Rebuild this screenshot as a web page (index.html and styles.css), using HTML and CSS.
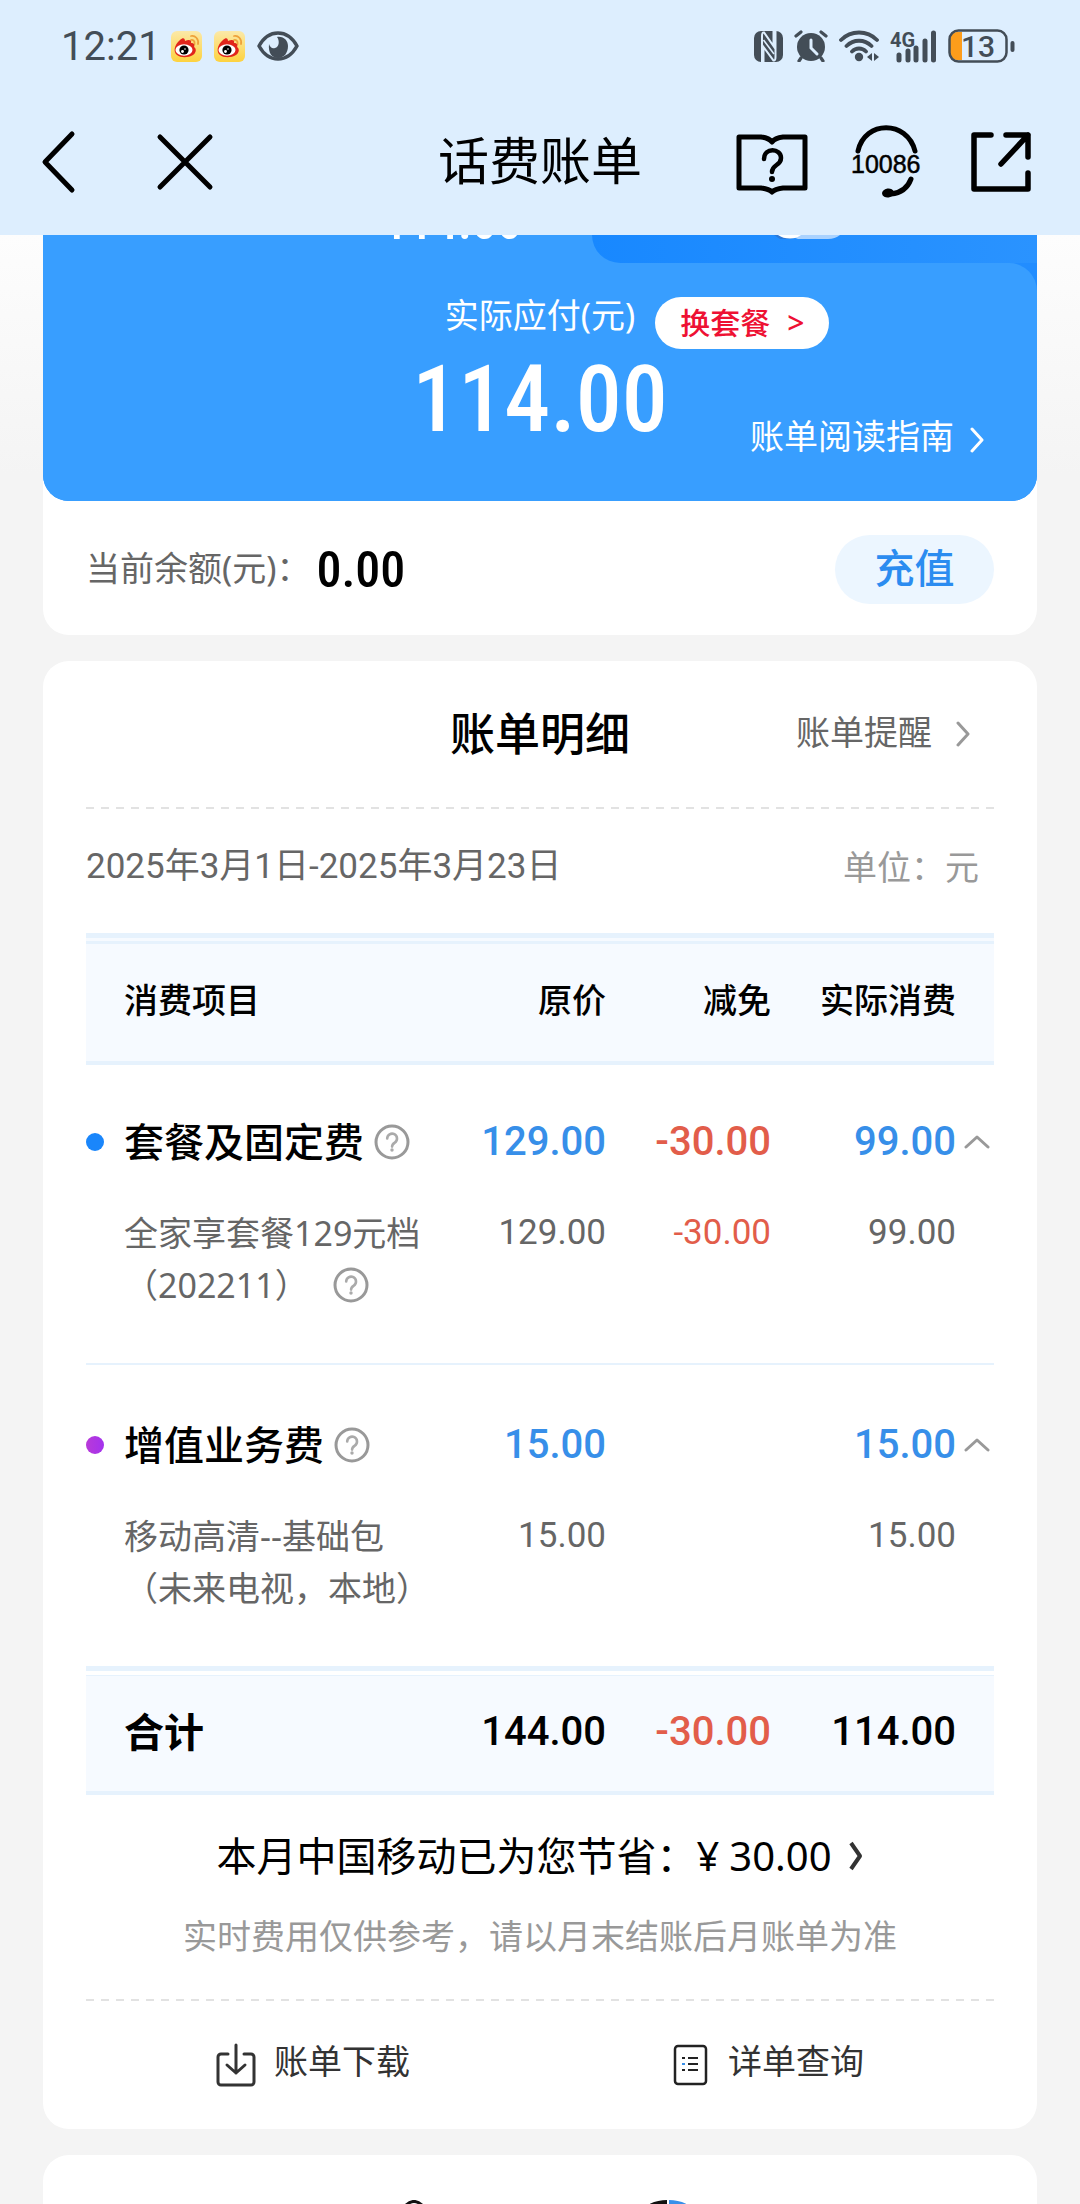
FILE: index.html
```html
<!DOCTYPE html>
<html lang="zh-CN">
<head>
<meta charset="utf-8">
<meta name="viewport" content="width=device-width, initial-scale=1">
<title>话费账单</title>
<link rel="stylesheet" href="styles.css">
</head>
<body>
<svg class="sprite" aria-hidden="true">
  <symbol id="help" viewBox="0 0 36 36">
    <circle cx="18" cy="18" r="16" fill="none" stroke="#999" stroke-width="3"/>
    <path d="M13.200 14.500a4.900 4.900 0 1 1 7.600 4.100c-1.900 1.200-2.700 2-2.700 4" fill="none" stroke="#aaa" stroke-width="2.600" stroke-linecap="round"/>
    <circle cx="18" cy="26" r="1.700" fill="#aaa"/>
  </symbol>
  <symbol id="arrow" viewBox="0 0 14 26">
    <path d="M2 2l10 11L2 24" fill="none" stroke="currentColor" stroke-width="3" stroke-linecap="round" stroke-linejoin="round"/>
  </symbol>
  <symbol id="fold" viewBox="0 0 26 14">
    <path d="M2 12L13 2l11 10" fill="none" stroke="#999" stroke-width="3" stroke-linecap="round" stroke-linejoin="round"/>
  </symbol>
  <symbol id="weibo" viewBox="0 0 31 31">
    <rect width="31" height="31" rx="6" fill="url(#gold)"/>
    <path d="M20 5c4-1 8 3 7 8" fill="none" stroke="#eea13a" stroke-width="1.800" stroke-linecap="round"/>
    <path d="M20 9c2-.5 4 1 3.500 4" fill="none" stroke="#eea13a" stroke-width="1.800" stroke-linecap="round"/>
    <path d="M9 9c3-3 5-2 5 1 4-2 7-1 6 2 3 0 4 2 3 4 3 2 2 6-1 8-5 3-12 3-16 0C2 21 3 14 9 9z" fill="#e1251b"/>
    <ellipse cx="13" cy="19" rx="8.500" ry="5.800" fill="#fff"/>
    <circle cx="13" cy="19" r="4.600" fill="#000"/>
    <circle cx="11.500" cy="20.500" r="1.400" fill="#fff"/>
    <circle cx="14" cy="18" r=".8" fill="#fff"/>
  </symbol>
  <linearGradient id="gold" x1="0" y1="0" x2="0" y2="1">
    <stop offset="0" stop-color="#fbe9a8"/><stop offset="1" stop-color="#fdd23f"/>
  </linearGradient>
</svg>

<header class="top">
  <div class="status">
    <span class="clock">12:21</span>
    <svg class="app" width="31" height="31"><use href="#weibo"/></svg>
    <svg class="app" width="31" height="31"><use href="#weibo"/></svg>
    <svg width="42" height="30" viewBox="0 0 42 30">
      <path d="M2 15C7 6 14 2 21 2s14 4 19 13c-5 9-12 13-19 13S7 24 2 15z" fill="none" stroke="#434d57" stroke-width="3.500" stroke-linejoin="round"/>
      <path d="M20 6c7-1 11 4 11 9 0 7-4 12-10 12S11 22 12 13c1 3 3 5 6 4 4-1 5-7 2-11z" fill="#434d57"/>
    </svg>
    <div class="signals">
      <svg width="29" height="31" viewBox="0 0 29 31">
        <rect width="29" height="31" rx="7" fill="#434d57"/>
        <path d="M8 31V5q0-4 2-3.500L19.500 15V0M21.500 0v26q0 4-2 3.500L9.500 16v15" fill="none" stroke="#ddeefe" stroke-width="2"/>
        <path d="M9.500 9L20 23" stroke="#ddeefe" stroke-width="1.600"/>
      </svg>
      <svg width="34" height="32" viewBox="0 0 34 32" fill="none" stroke="#434d57" stroke-linecap="round">
        <circle cx="17" cy="17" r="14" fill="#434d57" stroke="none"/>
        <path d="M2 6l5-4M32 6l-5-4M7 28l-2 3M27 28l2 3" stroke-width="3.200"/>
        <path d="M17 10v8l6 6" stroke="#ddeefe" stroke-width="3"/>
      </svg>
      <svg width="40" height="32" viewBox="0 0 40 32" fill="none" stroke="#434d57" stroke-width="3.800" stroke-linecap="round">
        <path d="M2 10c10-10 26-10 36 0M7.500 16c7-7 18-7 25 0M13 21.500c4-4 10-4 14 0"/>
        <circle cx="20" cy="27" r="4.200" fill="#434d57" stroke="none"/>
        <path d="M33 23v8l-5-4zM35 23v8l5-4z" fill="#434d57" stroke="none"/>
      </svg>
      <svg class="bars" width="47" height="33" viewBox="0 0 47 33">
        <text x="0" y="17" class="net">4G</text>
        <path d="M9 25v5M18 21v9M26 18v12M35 11v19M43.500 3v27" stroke="#434d57" stroke-width="5" stroke-linecap="round"/>
      </svg>
      <svg width="68" height="34" viewBox="0 0 68 34">
        <path d="M9 3h5v28H9a7 7 0 0 1-7-7V10a7 7 0 0 1 7-7z" fill="#fd9d1b"/>
        <rect x="1.500" y="1.500" width="57" height="31" rx="9" fill="none" stroke="#434d57" stroke-width="2.500"/>
        <path d="M64.500 14v7" stroke="#434d57" stroke-width="4" stroke-linecap="round"/>
        <text x="13" y="28" class="charge">13</text>
      </svg>
    </div>
  </div>
  <nav class="nav">
    <div class="nav-side">
      <button type="button" class="plain" aria-label="返回">
        <svg width="36" height="64" viewBox="0 0 36 64" fill="none" stroke="#000" stroke-width="5" stroke-linecap="round" stroke-linejoin="round"><path d="M32 4L5 32l27 28"/></svg>
      </button>
      <button type="button" class="plain close" aria-label="关闭">
        <svg width="58" height="58" viewBox="0 0 58 58" fill="none" stroke="#000" stroke-width="5" stroke-linecap="round"><path d="M4 4l50 50M54 4L4 54"/></svg>
      </button>
    </div>
    <h1 class="page-title">话费账单</h1>
    <div class="nav-side nav-tools">
      <button type="button" class="plain" aria-label="帮助">
        <svg width="72" height="66" viewBox="0 0 72 66" fill="none" stroke="#000" stroke-width="5" stroke-linecap="round" stroke-linejoin="round">
          <path d="M3 8h22q8 1 11 5 3-4 11-5h22v51H47q-8 1-11 4-3-3-11-4H3z"/>
          <path d="M28 30c0-12 17-11 17-1 0 8-9 6-9 14" stroke-width="4.500"/>
          <circle cx="36" cy="50" r="3" fill="#000" stroke="none"/>
        </svg>
      </button>
      <button type="button" class="plain" aria-label="客服 10086">
        <svg width="78" height="76" viewBox="0 0 78 76" fill="none" stroke="#000" stroke-width="5" stroke-linecap="round">
          <path d="M8 27C15-4 57-4 65 27"/>
          <path d="M61 55c-3 8-10 14-20 15"/>
          <ellipse cx="38" cy="69" rx="6" ry="4.500" fill="#000" stroke="none" transform="rotate(-8 38 69)"/>
          <text x="1" y="49" class="hotline">10086</text>
        </svg>
      </button>
      <button type="button" class="plain" aria-label="分享">
        <svg width="62" height="62" viewBox="0 0 62 62" fill="none" stroke="#000" stroke-width="5.500" stroke-linecap="round" stroke-linejoin="round">
          <path d="M21 4H4v54h54V42M36 4h22v22M58 4L31 33"/>
        </svg>
      </button>
    </div>
  </nav>
</header>

<main class="content">
  <section class="card">
    <div class="hero">
      <div class="hero-peek">
        <span class="peek-amount">114.00</span>
        <div class="peek-tab">
          <svg width="80" height="4" viewBox="0 0 80 4"><path d="M14 0h52q-5 4-12 4H24z" fill="#a9d2ff"/><path d="M0 0h26q-4 4-13 4H6z" fill="#2a78d8"/><path d="M4 0h23q-4 3.500-11 3.500T4 0z" fill="#fff"/></svg>
        </div>
      </div>
      <div class="hero-main">
        <div class="hero-row">
          <span class="due-label">实际应付(元)</span>
          <a href="#" class="pill">换套餐<span>&gt;</span></a>
        </div>
        <div class="hero-row hero-sum">
          <strong class="due">114.00</strong>
          <a href="#" class="guide"><span>账单阅读指南</span><svg width="14" height="26"><use href="#arrow"/></svg></a>
        </div>
      </div>
    </div>
    <div class="balance">
      <span class="balance-label">当前余额(元)：</span>
      <strong class="balance-value">0.00</strong>
      <button type="button" class="recharge">充值</button>
    </div>
  </section>

  <section class="card detail">
    <div class="detail-head">
      <h2>账单明细</h2>
      <a href="#" class="remind"><span>账单提醒</span><svg width="14" height="26"><use href="#arrow"/></svg></a>
    </div>
    <div class="dashes"></div>
    <div class="period"><span class="range">2025年3月1日-2025年3月23日</span><span class="unit">单位：元</span></div>

    <table class="bill">
      <colgroup><col><col class="c-price"><col class="c-cut"><col class="c-real"><col class="c-fold"></colgroup>
      <thead>
        <tr><th scope="col" class="name">消费项目</th><th scope="col">原价</th><th scope="col">减免</th><th scope="col">实际消费</th><td></td></tr>
      </thead>
      <tbody>
        <tr class="group">
          <th scope="row" class="name"><div class="label"><i class="dot blue"></i>套餐及固定费<svg class="q" width="36" height="36"><use href="#help"/></svg></div></th>
          <td>129.00</td><td class="cut">-30.00</td><td>99.00</td>
          <td class="fold"><button type="button" class="plain" aria-label="收起"><svg width="26" height="14"><use href="#fold"/></svg></button></td>
        </tr>
        <tr class="item">
          <th scope="row" class="name"><div>全家享套餐129元档</div><div class="label">（202211）<svg class="q wide" width="36" height="36"><use href="#help"/></svg></div></th>
          <td>129.00</td><td class="cut">-30.00</td><td>99.00</td><td></td>
        </tr>
      </tbody>
      <tbody>
        <tr class="group">
          <th scope="row" class="name"><div class="label"><i class="dot purple"></i>增值业务费<svg class="q" width="36" height="36"><use href="#help"/></svg></div></th>
          <td>15.00</td><td></td><td>15.00</td>
          <td class="fold"><button type="button" class="plain" aria-label="收起"><svg width="26" height="14"><use href="#fold"/></svg></button></td>
        </tr>
        <tr class="item">
          <th scope="row" class="name"><div>移动高清--基础包</div><div>（未来电视，本地）</div></th>
          <td>15.00</td><td></td><td>15.00</td><td></td>
        </tr>
      </tbody>
      <tfoot>
        <tr><th scope="row" class="name">合计</th><td>144.00</td><td class="cut">-30.00</td><td>114.00</td><td></td></tr>
      </tfoot>
    </table>

    <a href="#" class="saving"><span>本月中国移动已为您节省：</span><span class="yen">¥</span><span>30.00</span><svg width="16" height="32" viewBox="0 0 16 32"><path d="M3 3l9 13-9 13" fill="none" stroke="#333" stroke-width="4" stroke-linejoin="round"/></svg></a>
    <p class="note">实时费用仅供参考，请以月末结账后月账单为准</p>
    <div class="dashes"></div>
    <div class="actions">
      <a href="#">
        <svg width="40" height="44" viewBox="0 0 40 44" fill="none" stroke="#333" stroke-width="3" stroke-linecap="round" stroke-linejoin="round"><path d="M12 11H5a3 3 0 0 0-3 3v25a3 3 0 0 0 3 3h30a3 3 0 0 0 3-3V14a3 3 0 0 0-3-3h-7M20 2v28M11 22l9 8 9-8"/></svg>
        <span>账单下载</span>
      </a>
      <a href="#">
        <svg width="40" height="44" viewBox="0 0 40 44"><rect x="5" y="3" width="31" height="38" rx="3" fill="none" stroke="#222" stroke-width="2.500"/><path d="M18 15h10M18 21h10M18 27h10" stroke="#222" stroke-width="2"/><path d="M12 15h3M12 27h3" stroke="#222" stroke-width="2"/><path d="M12 21h3" stroke="#378fe9" stroke-width="2"/></svg>
        <span>详单查询</span>
      </a>
    </div>
  </section>

  <section class="card next">
    <svg width="18" height="4" viewBox="0 0 18 4" fill="none"><path d="M0 6q9-9 18 0" stroke="#111" stroke-width="3"/></svg>
    <svg class="ring" width="36" height="4" viewBox="0 0 36 4" fill="none" stroke-width="4"><path d="M0 6q8-4 17-4" stroke="#111"/><path d="M19 2q9 0 17 4" stroke="#378fe9"/></svg>
  </section>
</main>
</body>
</html>
```

FILE: styles.css
```css
:root {
  --text: 34px;
  --digits: 35px;
  --large: 40px;
  --blue: #378fe9;
  --red: #e25d4a;
  --line: #e6f2fd;
  --band: #f6faff;
  --gray: #666;
  --light: #999;
  --numeric: Roboto, "Noto Sans CJK SC", sans-serif;
  --narrow: "Roboto Condensed", Roboto, sans-serif;
}

* { box-sizing: border-box; }

body {
  margin: 0;
  min-height: 100vh;
  display: flex;
  flex-direction: column;
  background: #f4f4f4;
  color: #000;
  font-family: "Noto Sans", "Noto Sans CJK SC", sans-serif;
  font-size: var(--text);
  line-height: 48px;
}

a { color: inherit; text-decoration: none; }
h1, h2, p { margin: 0; }
svg { display: block; flex: none; }
.sprite { position: absolute; width: 0; height: 0; }

.plain {
  padding: 0;
  border: 0;
  background: none;
}

/* status bar and navigation */
.top { background: #ddeefe; }

.status {
  display: flex;
  align-items: center;
  height: 92px;
  padding: 0 64px 0 61px;
  color: #434d57;
}

.clock { font-family: var(--numeric); font-size: 40px; margin-right: 10px; padding-top: 2px; }
.status .app { margin-right: 12px; }

.signals {
  display: flex;
  align-items: center;
  gap: 11px;
  margin-left: auto;
}

.bars { overflow: visible; }
.net { font: 700 20px Roboto, sans-serif; fill: #434d57; }
.charge { font: 500 30px Roboto, sans-serif; fill: #434d57; }
.hotline { font: 400 25px "Liberation Sans", sans-serif; fill: #000; stroke: #000; stroke-width: .5px; }

.nav {
  display: grid;
  grid-template-columns: 1fr auto 1fr;
  align-items: center;
  height: 143px;
  padding: 0 48px 3px 40px;
}

.nav-side { display: flex; align-items: center; }
.close { margin-left: 80px; }
.nav-tools { justify-content: flex-end; gap: 42px; }
.page-title { padding: 0 0 5px 8px; font-size: 51px; line-height: 60px; font-weight: 400; }

/* cards */
.content {
  flex: 1;
  display: flex;
  flex-direction: column;
  gap: 26px;
  padding: 0 43px;
  background: linear-gradient(#fdfdfd, #f4f4f4 240px);
}

.card { background: #fff; border-radius: 26px; }
.card:first-child { border-radius: 0 0 26px 26px; }

.hero {
  overflow: hidden;
  border-radius: 0 0 26px 26px;
  background: #228dff;
  color: #fff;
}

.hero-peek {
  display: grid;
  grid-template: 28px / 549px 1fr;
  overflow: hidden;
  background: #389eff;
}

.peek-amount {
  align-self: end;
  justify-self: end;
  padding: 0 70px 15px 0;
  font: 500 50px/52px var(--narrow);
}

.peek-tab {
  padding-left: 182px;
  border-radius: 0 0 0 28px;
  background: linear-gradient(90deg, #1888ff, #2a93ff);
}

.hero-main {
  padding: 34px 0 47px;
  border-radius: 0 28px 0 0;
  background: #389eff;
}

.hero-row {
  display: grid;
  grid-template-columns: 1fr auto 1fr;
  align-items: start;
}

.due-label { grid-column: 2; line-height: 36px; }

.pill {
  display: flex;
  align-items: center;
  gap: 17px;
  justify-self: start;
  height: 52px;
  margin-left: 20px;
  padding: 0 25px;
  border-radius: 26px;
  background: #fff;
  color: #ee1133;
  font-size: 30px;
  font-weight: 500;
}

.hero-sum { min-height: 105px; }

.due {
  grid-column: 2;
  font: 500 92px/102px var(--narrow);
}

.guide {
  display: flex;
  align-items: center;
  gap: 16px;
  align-self: end;
  justify-self: end;
  margin-right: 53px;
  line-height: 36px;
}

.guide svg { margin-top: 8px; }

.balance {
  display: flex;
  align-items: center;
  padding: 34px 43px 31px;
}

.balance-label { padding-bottom: 4px; color: var(--gray); }
.balance-value { margin-left: 6px; font: 500 50px/52px var(--narrow); }

.recharge {
  margin-left: auto;
  width: 159px;
  height: 69px;
  padding: 0 0 4px;
  border: 0;
  border-radius: 35px;
  background: #ecf6ff;
  color: #2b8cf0;
  font: 500 40px/60px "Noto Sans", "Noto Sans CJK SC", sans-serif;
}

/* bill detail */
.detail { padding: 0 43px; }

.detail-head {
  display: grid;
  grid-template-columns: 1fr auto 1fr;
  align-items: center;
  height: 146px;
}

.detail-head h2 { grid-column: 2; font-size: 45px; line-height: 60px; font-weight: 500; }

.remind {
  display: flex;
  align-items: center;
  gap: 24px;
  justify-self: end;
  margin-right: 24px;
  color: var(--gray);
}

.remind span { padding-bottom: 5px; }
.remind svg { color: var(--light); }

.dashes {
  height: 2px;
  background: repeating-linear-gradient(90deg, #e2e2e2 0 8px, transparent 8px 15px);
}

.period {
  display: flex;
  justify-content: space-between;
  align-items: center;
  height: 124px;
  padding: 0 15px 8px 0;
}

.range { font-family: var(--numeric); font-size: var(--digits); color: var(--gray); }
.unit { color: var(--light); }

.bill {
  width: 100%;
  table-layout: fixed;
  border-collapse: separate;
  border-spacing: 0;
}

.c-price { width: 164px; }
.c-cut { width: 165px; }
.c-real { width: 185px; }
.c-fold { width: 38px; }

.bill th, .bill td {
  padding: 0;
  text-align: right;
  font-weight: 400;
  white-space: nowrap;
}

.bill td { font-family: var(--numeric); }
.bill .name { padding-left: 38px; text-align: left; }

.bill thead th, .bill thead td,
.bill tfoot th, .bill tfoot td {
  border-top: 5px solid var(--line);
  border-bottom: 4px solid var(--line);
}

.bill thead th, .bill thead td {
  height: 132px;
  font-weight: 500;
  background: linear-gradient(var(--band) 3px, var(--line) 3px 6px, var(--band) 6px);
}

.bill tfoot th, .bill tfoot td {
  height: 129px;
  padding-top: 2px;
  font-size: var(--large);
  font-weight: 500;
  background: linear-gradient(#fff 4px, var(--line) 4px 5px, var(--band) 5px);
}

.bill tfoot th { font-weight: 700; }

.group th, .group td {
  font-size: var(--large);
  line-height: 60px;
}

.group td { color: var(--blue); }
.bill .group th { font-weight: 500; padding: 47px 0 0; }
.bill .group td { font-weight: 500; padding-top: 47px; }
.bill tbody + tbody .group th,
.bill tbody + tbody .group td { padding-top: 50px; border-top: 2px solid var(--line); }

.item th, .item td { color: var(--gray); line-height: 52px; vertical-align: top; }
.bill .item th, .bill .item td { padding-top: 35px; padding-bottom: 52px; }
.item td { font-size: var(--digits); }
.bill td.cut { color: var(--red); }

.label { display: flex; align-items: center; }
.dot { width: 18px; height: 18px; margin-right: 20px; border-radius: 50%; }
.dot.blue { background: #1a86fb; }
.dot.purple { background: linear-gradient(90deg, #b83ad8, #a432ee); }
.q { margin-left: 10px; }
.q.wide { margin-left: 24px; }
.fold .plain { display: flex; align-items: center; height: 52px; margin-left: 8px; }

.saving {
  display: flex;
  justify-content: center;
  align-items: center;
  padding-top: 31px;
  font-size: var(--large);
  line-height: 60px;
}

.yen { margin-right: 10px; }
.saving svg { margin-left: 16px; }

.note {
  padding: 25px 0 38px;
  text-align: center;
  color: var(--light);
  line-height: 50px;
}

.actions {
  display: grid;
  grid-template-columns: 1fr 1fr;
  height: 128px;
  color: #333;
}

.actions a {
  display: flex;
  justify-content: center;
  align-items: center;
  gap: 18px;
}

.actions span { padding-bottom: 8px; }

.next {
  display: flex;
  align-items: flex-end;
  height: 49px;
  padding-left: 362px;
  border-radius: 26px 26px 0 0;
}

.ring { margin-left: 227px; }
```
